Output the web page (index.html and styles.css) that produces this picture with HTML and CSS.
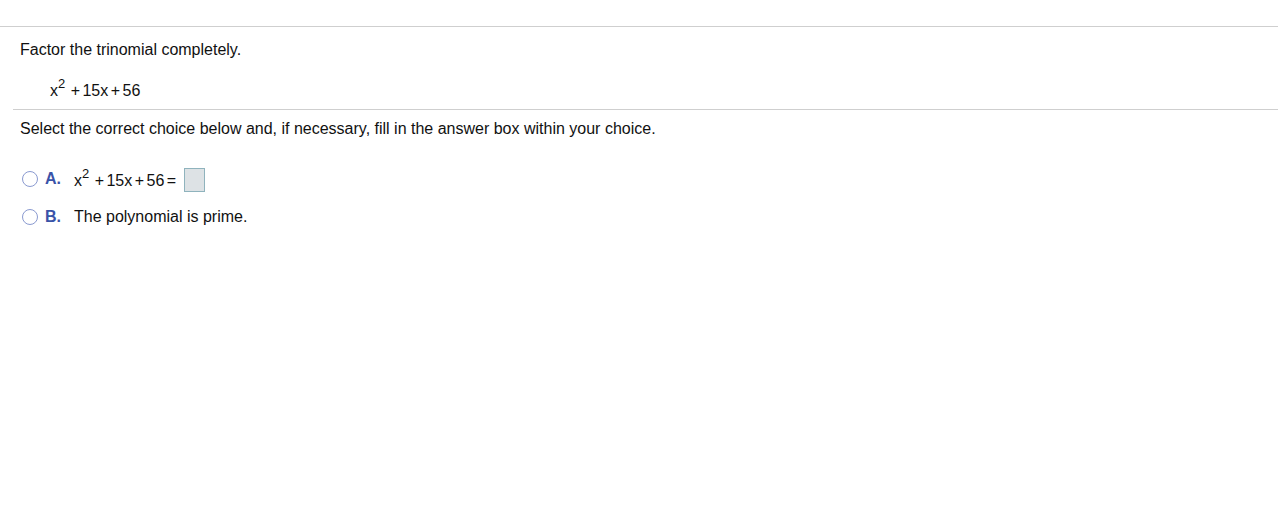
FILE: index.html
```html
<!DOCTYPE html>
<html>
<head>
<meta charset="utf-8">
<link rel="stylesheet" href="styles.css">
</head>
<body>
<div class="topbar"></div>
<div class="question">
  <p class="prompt">Factor the trinomial completely.</p>
  <p class="expr">x<sup>2</sup> + 15x + 56</p>
</div>
<div class="answer">
  <p class="instr">Select the correct choice below and, if necessary, fill in the answer box within your choice.</p>
  <div class="choices">
    <div class="choice">
      <span class="radio"></span>
      <span class="letter">A.</span>
      <span class="ctext math">x<sup>2</sup> + 15x + 56 = <span class="box"></span></span>
    </div>
    <div class="choice">
      <span class="radio"></span>
      <span class="letter">B.</span>
      <span class="ctext">The polynomial is prime.</span>
    </div>
  </div>
</div>
</body>
</html>
```
FILE: styles.css
```css
html, body {
  margin: 0;
  padding: 0;
  background: #fff;
}
body {
  font-family: "Liberation Sans", Arial, sans-serif;
  font-size: 16px;
  color: #111;
}
p { margin: 0; }
.topbar {
  height: 26px;
  border-bottom: 1px solid #cfcfcf;
}
.question {
  margin-left: 13px;
  padding: 13px 7px 7px;
  border-bottom: 1px solid #cfcfcf;
}
.prompt {
  line-height: 20px;
}
.expr {
  margin-top: 20px;
  margin-left: 30px;
  line-height: 22px;
  word-spacing: -2px;
}
sup {
  font-size: 13px;
  line-height: 0;
  vertical-align: 8px;
  margin-right: 3px;
}
.answer {
  padding: 9px 20px;
}
.instr { line-height: 20px; }
.choices {
  margin-top: 27px;
  display: flex;
  flex-direction: column;
  gap: 13px;
}
.choice {
  display: flex;
  align-items: center;
  height: 25px;
}
.radio {
  width: 14px;
  height: 14px;
  border: 1.5px solid #8a9ad0;
  border-radius: 50%;
  margin-left: 2px;
  flex: none;
  box-sizing: content-box;
}
.letter {
  color: #3a53a8;
  font-weight: bold;
  margin-left: 7px;
  width: 29px;
}
.ctext {
  line-height: 25px;
}
.math {
  word-spacing: -2px;
  padding-top: 4px;
}
.box {
  display: inline-block;
  width: 19px;
  height: 22px;
  background: #dde2e5;
  border: 1px solid #8fb3bd;
  margin-left: 5px;
  vertical-align: -6px;
}
```
